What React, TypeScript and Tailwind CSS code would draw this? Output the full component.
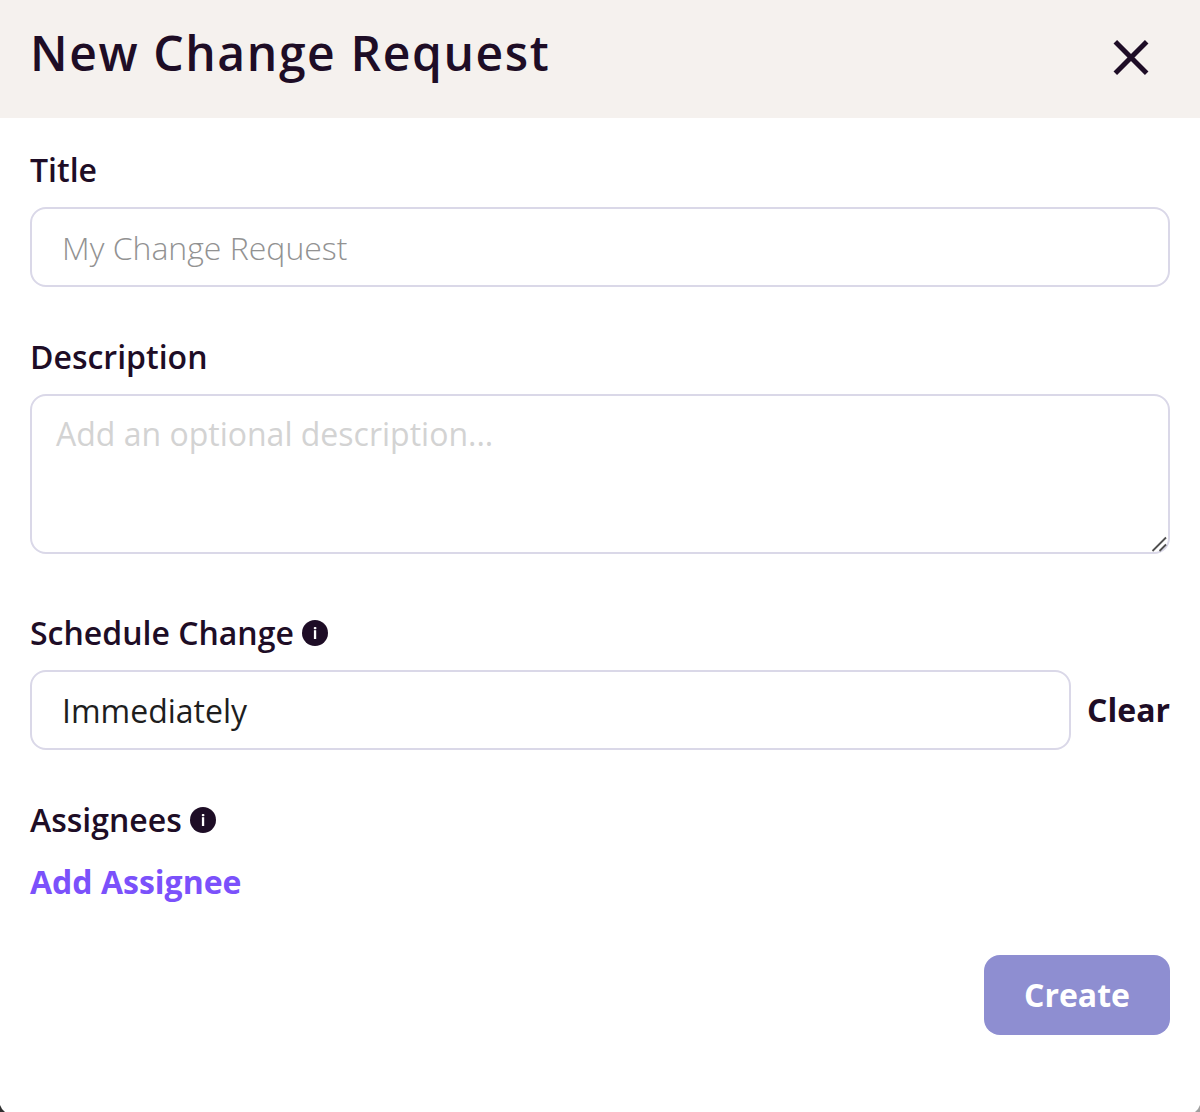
import React from 'react';

function Info() {
  return (
    <svg width="26" height="26" viewBox="0 0 26 26" aria-hidden="true">
      <circle cx="13" cy="13" r="13" fill="#1e0d26" />
      <rect x="11.8" y="7" width="2.6" height="2.2" rx="0.8" fill="#fff" />
      <rect x="11.9" y="10.2" width="2.3" height="8.8" fill="#fff" />
    </svg>
  );
}

const label = 'text-[32px] leading-[44px] font-semibold text-[#1e0d26]';

export default function App() {
  return (
    <div className="relative h-[1112px] w-[1200px] overflow-hidden bg-white font-['Open_Sans',sans-serif]">
      <header className="flex h-[118px] items-start justify-between bg-[#f5f1ee] pl-[30px] pr-[51px]">
        <h1 className="mt-[20px] whitespace-nowrap text-[48px] leading-[66px] font-semibold tracking-[1.6px] text-[#1e0d26]">New Change Request</h1>
        <button aria-label="Close" className="mt-[39px]">
          <svg width="36" height="37" viewBox="0 0 36 37" fill="none" stroke="#1e0d26" strokeWidth="5"><path d="M2.3 2.8l31.4 31.4M33.7 2.8L2.3 34.2" /></svg>
        </button>
      </header>
      <main className="flex flex-col px-[30px]">
        <label className={`${label} mt-[30px]`}>Title</label>
        <input placeholder="My Change Request" className="mt-[15px] h-[80px] rounded-[16px] border-2 border-[#dad8e8] px-[30px] text-[32px] font-light text-[#1e1e1e] outline-none placeholder:text-[#929292]" />
        <label className={`${label} mt-[48px]`}>Description</label>
        <div className="relative mt-[15px] h-[160px]">
          <textarea placeholder="Add an optional description..." className="block h-full w-full resize-none rounded-[16px] border-2 border-[#dad8e8] px-[24px] pt-[16px] text-[32px] leading-[44px] text-[#1e1e1e] outline-none placeholder:text-[#d3d3d3]" />
          <svg className="pointer-events-none absolute right-[3px] bottom-[2px]" width="16" height="16" viewBox="0 0 16 16" fill="none" stroke="#505050" strokeWidth="1.8"><path d="M1.5 15L15 1.5M8.5 15L15 8.5" /></svg>
        </div>
        <div className="mt-[57px] flex items-center gap-[8px]"><span className={label}>Schedule Change</span><Info /></div>
        <div className="mt-[15px] flex items-center gap-[16px]">
          <input defaultValue="Immediately" className="h-[80px] min-w-0 flex-1 rounded-[16px] border-2 border-[#dad8e8] px-[30px] text-[32px] text-[#1e1e1e] outline-none" />
          <button className="text-[32px] leading-[44px] font-bold text-[#1e0d26]">Clear</button>
        </div>
        <div className="mt-[48px] flex items-center gap-[8px]"><span className={label}>Assignees</span><Info /></div>
        <button className="mt-[18px] self-start text-[32px] leading-[44px] font-bold text-[#7b51fb]">Add Assignee</button>
        <button className="mt-[51px] h-[80px] w-[186px] self-end rounded-[16px] bg-[#8e8ed1] text-[32px] font-bold text-white">Create</button>
      </main>
      <svg className="absolute bottom-0 left-0" width="6" height="8" viewBox="0 0 6 8"><path d="M0 1Q1.5 5.5 5 8H0z" fill="#2f2f2f" /></svg>
      <svg className="absolute right-0 bottom-0" width="6" height="8" viewBox="0 0 6 8"><path d="M6 1Q4.5 5.5 1 8H6z" fill="#a0a0a0" /></svg>
    </div>
  );
}
